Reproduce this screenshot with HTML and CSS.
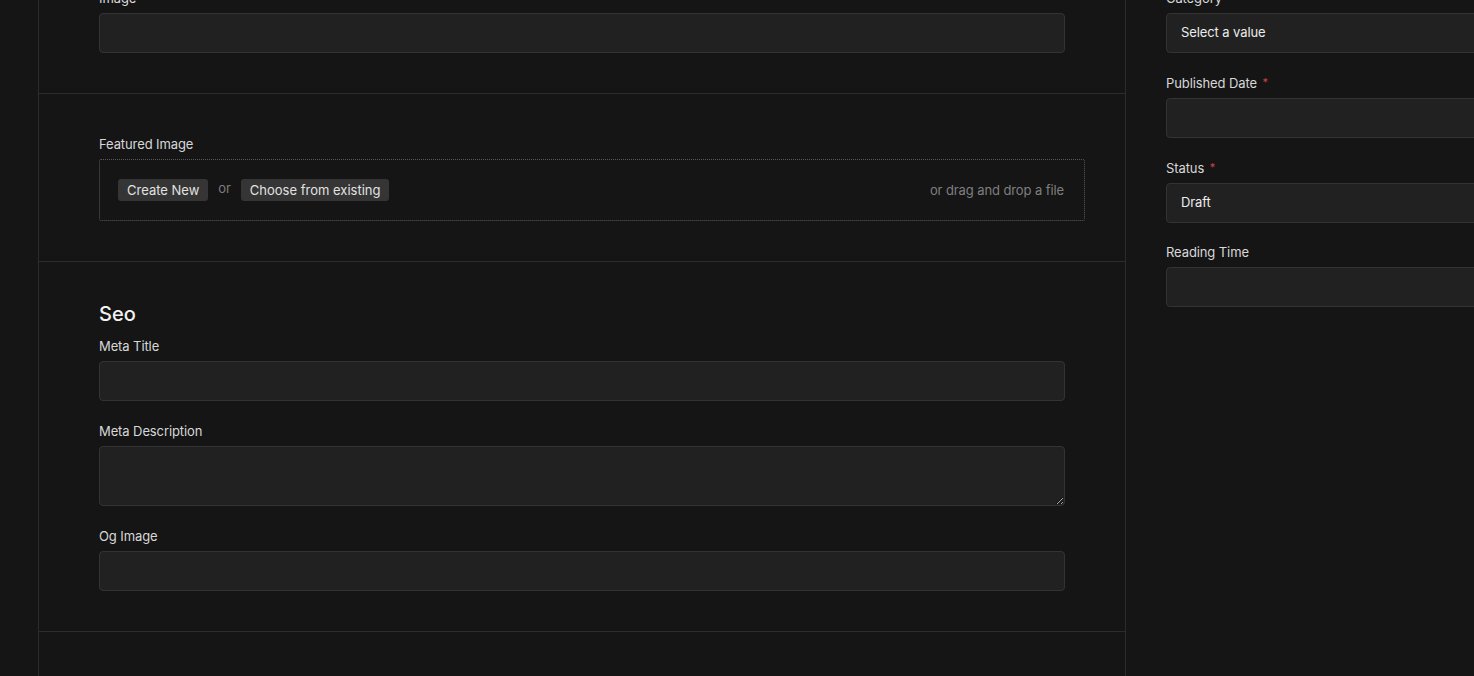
FILE: index.html
```html
<!DOCTYPE html>
<html>
<head>
<meta charset="utf-8">
<link rel="stylesheet" href="styles.css">
</head>
<body>
<div class="layout">
  <div class="gutter"></div>
  <main class="main">
    <section class="section">
      <div class="field">
        <label class="label">Image</label>
        <input class="input" type="text">
      </div>
    </section>
    <section class="section media">
      <div class="field">
        <label class="label">Featured Image</label>
        <div class="dropzone">
          <div class="dz-actions">
            <button class="btn">Create New</button>
            <span class="or">or</span>
            <button class="btn">Choose from existing</button>
          </div>
          <span class="dz-hint">or drag and drop a file</span>
        </div>
      </div>
    </section>
    <section class="section">
      <h2 class="heading">Seo</h2>
      <div class="field">
        <label class="label">Meta Title</label>
        <input class="input" type="text">
      </div>
      <div class="field">
        <label class="label">Meta Description</label>
        <textarea class="input textarea"></textarea>
      </div>
      <div class="field">
        <label class="label">Og Image</label>
        <input class="input" type="text">
      </div>
    </section>
    <section class="section empty"></section>
  </main>
  <aside class="sidebar">
    <div class="field">
      <label class="label">Category</label>
      <div class="input select">Select a value</div>
    </div>
    <div class="field">
      <label class="label">Published Date <span class="req">*</span></label>
      <input class="input" type="text">
    </div>
    <div class="field">
      <label class="label">Status <span class="req">*</span></label>
      <div class="input select">Draft</div>
    </div>
    <div class="field">
      <label class="label">Reading Time</label>
      <input class="input" type="text">
    </div>
  </aside>
</div>
</body>
</html>
```

FILE: styles.css
```css
html, body {
  margin: 0;
  padding: 0;
  background: #151515;
  overflow: hidden;
  height: 676px;
}
body {
  font-family: Inter, "Noto Sans", "Liberation Sans", sans-serif;
  font-size: 13px;
  letter-spacing: -0.1px;
  color: #dcdcdc;
}
.layout {
  display: flex;
  margin-top: -51px;
  min-height: 800px;
}
.gutter {
  width: 38px;
  flex: none;
}
.main {
  width: 1086px;
  flex: none;
  border-left: 1px solid #2c2c2c;
  border-right: 1px solid #2c2c2c;
}
.section {
  padding: 40px 60px;
  border-bottom: 1px solid #2c2c2c;
  display: flex;
  flex-direction: column;
  gap: 21px;
}
.section.media {
  padding-top: 41px;
}
.section.empty {
  border-bottom: none;
  height: 100px;
}
.field {
  display: flex;
  flex-direction: column;
}
.label {
  line-height: 18px;
  margin-bottom: 6px;
  color: #d8d8d8;
}
.req {
  color: #c9434a;
  font-size: 11px;
  margin-left: 2px;
  vertical-align: 2px;
}
.input {
  box-sizing: border-box;
  height: 40px;
  width: 100%;
  background: #212121;
  border: 1px solid #333333;
  border-radius: 4px;
  color: #eeeeee;
  font: inherit;
  padding: 0 14px;
  outline: none;
  display: block;
  margin: 0;
}
.textarea {
  height: 60px;
  resize: vertical;
  padding: 10px 14px;
}
.select {
  display: flex;
  align-items: center;
  color: #ececec;
  padding-bottom: 2px;
}
.heading {
  margin: 0 0 -10px 0;
  font-size: 20px;
  line-height: 24px;
  font-weight: 500;
  letter-spacing: 0;
  color: #f2f2f2;
}
.dropzone {
  box-sizing: border-box;
  height: 62px;
  margin-right: -20px;
  border: 1px dotted #5a5a5a;
  border-radius: 2px;
  display: flex;
  align-items: center;
  justify-content: space-between;
  padding: 0 20px 0 18px;
}
.dz-actions {
  display: flex;
  align-items: center;
  gap: 10px;
}
.btn {
  font: inherit;
  font-size: 13px;
  color: #e2e2e2;
  background: #353535;
  border: none;
  border-radius: 3px;
  height: 22px;
  padding: 0 9px;
  line-height: 22px;
}
.or {
  color: #7d7d7d;
  margin-top: -4px;
}
.dz-hint {
  color: #7f7f7f;
}
.sidebar {
  flex: none;
  width: 400px;
  padding: 40px 0 40px 40px;
  display: flex;
  flex-direction: column;
  gap: 20px;
}
```
